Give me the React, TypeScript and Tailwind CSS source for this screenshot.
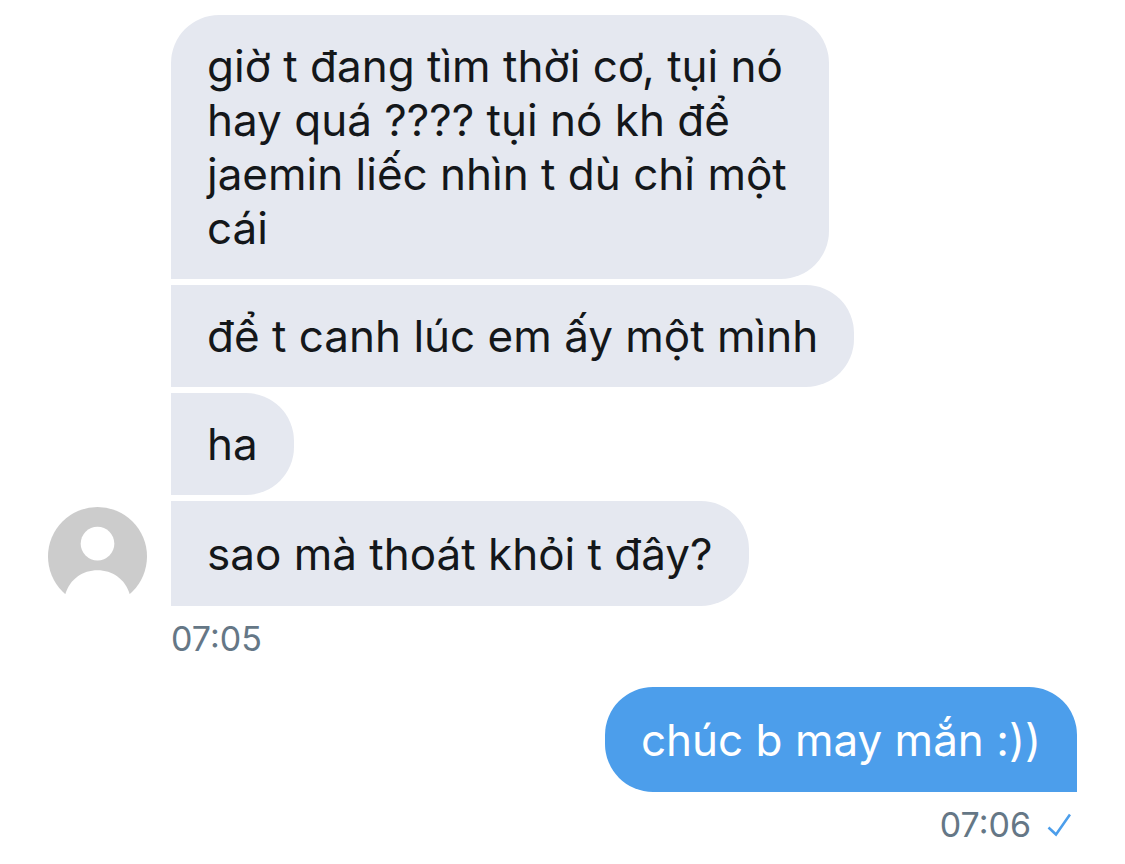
import React from 'react';

interface BubbleProps {
  text: string;
  className?: string;
}

const Bubble: React.FC<BubbleProps> = ({ text, className = '' }) => (
  <div className={`w-fit px-9 text-[44px] leading-[54px] ${className}`}>
    <p>{text}</p>
  </div>
);

const Avatar = () => (
  <svg viewBox="0 0 100 100" className="w-[99px] h-[99px] shrink-0" aria-hidden="true">
    <defs>
      <clipPath id="avatar-clip">
        <rect width="100" height="88" />
      </clipPath>
    </defs>
    <g clipPath="url(#avatar-clip)">
      <circle cx="50" cy="50" r="50" fill="#cccccc" />
      <circle cx="50" cy="37" r="17" fill="#ffffff" />
      <path d="M17.5 88C22 73 35 64 50 64S78 73 82.5 88V90H17.5z" fill="#ffffff" />
    </g>
  </svg>
);

const App: React.FC = () => {
  const incoming = [
    { text: 'giờ t đang tìm thời cơ, tụi nó hay quá ???? tụi nó kh để jaemin liếc nhìn t dù chỉ một cái', shape: 'max-w-[658px] rounded-t-[48px]' },
    { text: 'để t canh lúc em ấy một mình', shape: 'rounded-tr-[48px]' },
    { text: 'ha', shape: 'rounded-tr-[48px]' },
  ];

  return (
    <main className="min-h-screen bg-white px-12 pt-[15px] font-['Inter',sans-serif] text-[#14171a]">
      <section className="flex flex-col gap-[6px] pl-[123px]">
        {incoming.map((message) => (
          <Bubble key={message.text} text={message.text} className={`bg-[#e5e8f0] py-6 rounded-br-[48px] ${message.shape}`} />
        ))}
      </section>
      <section className="mt-[6px] flex items-end gap-6">
        <Avatar />
        <Bubble text="sao mà thoát khỏi t đây?" className="bg-[#e5e8f0] rounded-r-[48px] pt-[26px] pb-[25px]" />
      </section>
      <time className="mt-3 block pl-[123px] text-[34px] leading-[42px] text-[#657786]">07:05</time>
      <section className="mt-[27px] flex flex-col items-end">
        <Bubble text="chúc b may mắn :))" className="bg-[#4c9eeb] text-white rounded-l-[48px] rounded-tr-[48px] pt-[26px] pb-[25px]" />
        <div className="mt-3 flex items-center gap-4 pr-[6px] text-[34px] leading-[42px] text-[#657786]">
          <time>07:06</time>
          <svg viewBox="0 0 24 24" className="size-6" fill="none" stroke="#4c9eeb" strokeWidth="2.6" role="img" aria-label="Seen">
            <path d="M1.5 14.5L9 21.5L23 1.5" />
          </svg>
        </div>
      </section>
    </main>
  );
};

export default App;
